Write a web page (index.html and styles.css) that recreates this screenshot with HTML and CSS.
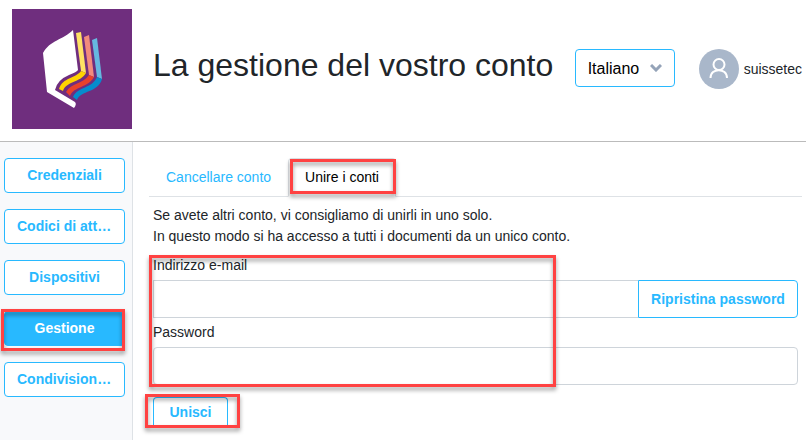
FILE: index.html
```html
<!DOCTYPE html>
<html lang="it">
<head>
  <title>La gestione del vostro conto</title>
  <meta charset="utf-8">
  <link rel="stylesheet" href="styles.css">
</head>
<body>
  <header class="header">
    <svg class="logo" viewBox="0 0 120 120">
      <rect width="120" height="120" fill="#6f2e7e"/>
      <path fill="#fff" d="M61 21 L66 61 Q65 63 57 66 Q45 71 43 81 L63 93 Q65 95 62 99 L35 83 L31 44 C38 31 51 31 61 21Z"/>
      <path fill="#ffe264" d="M64 24 L69 23 L74 64 L69 62Z"/>
      <path fill="#ffd400" d="M69 62 L74 64 C68 74 54 72 51 82 L47 80 C51 68 63 70 69 62Z"/>
      <path fill="#f28b7c" d="M72 28 L77 26 L82 68 L77 66Z"/>
      <path fill="#e8412b" d="M77 66 L82 68 C76 79 62 77 58 87 L54 83 C59 74 71 75 77 66Z"/>
      <path fill="#66b8e0" d="M80 31 L85 29 L90 70 L85 68Z"/>
      <path fill="#058ccd" d="M85 68 L90 70 C86 84 69 81 65 91 L61 88 C66 77 80 80 85 68Z"/>
    </svg>
    <h1 class="title">La gestione del vostro conto</h1>
    <select class="language" aria-label="Lingua">
      <option>Italiano</option>
    </select>
    <div class="user">
      <svg class="avatar" viewBox="0 0 40 40">
        <circle cx="20" cy="20" r="20" fill="#a9b7ca"/>
        <g fill="none" stroke="#fff" stroke-width="2">
          <circle cx="20" cy="15.5" r="5.5"/>
          <path d="M11.5 29 C11.5 18.5 28 18.5 28 29"/>
        </g>
      </svg>
      <span>suissetec</span>
    </div>
  </header>

  <div class="content">
    <nav class="sidebar">
      <button class="btn" type="button">Credenziali</button>
      <button class="btn" type="button">Codici di attivazione</button>
      <button class="btn" type="button">Dispositivi</button>
      <div class="marked">
        <button class="btn active" type="button">Gestione</button>
        <span class="mark mark-menu"></span>
      </div>
      <button class="btn" type="button">Condivisione dati</button>
    </nav>

    <main class="main">
      <div class="tabs">
        <a class="tab" href="#">Cancellare conto</a>
        <div class="marked">
          <a class="tab current" href="#">Unire i conti</a>
          <span class="mark mark-tab"></span>
        </div>
      </div>

      <form class="form">
        <p>Se avete altri conto, vi consigliamo di unirli in uno solo.<br>
        In questo modo si ha accesso a tutti i documenti da un unico conto.</p>

        <div class="marked fields">
          <label for="email">Indirizzo e-mail</label>
          <div class="group">
            <input class="input" type="email" id="email">
            <button class="btn reset" type="button">Ripristina password</button>
          </div>
          <label for="password">Password</label>
          <input class="input" type="password" id="password">
          <span class="mark mark-fields"></span>
        </div>

        <div class="marked submit">
          <button class="btn merge" type="button">Unisci</button>
          <span class="mark mark-submit"></span>
        </div>
      </form>
    </main>
  </div>
</body>
</html>
```

FILE: styles.css
```css
* {
  box-sizing: border-box;
}
body {
  margin: 0;
  min-height: 100vh;
  display: flex;
  flex-direction: column;
  font-family: "Liberation Sans", Arial, sans-serif;
  font-size: 14px;
  line-height: 21px;
  color: #212529;
  background: #fff;
}

/* header */
.header {
  display: flex;
  align-items: center;
  padding: 9px 4px 12px 12px;
  border-bottom: 1px solid #bbb;
}
.logo {
  flex: none;
  width: 120px;
  height: 120px;
}
.title {
  flex: 1;
  margin: 0 0 8px 21px;
  font-size: 32px;
  line-height: 38px;
  font-weight: normal;
  white-space: nowrap;
}
.language {
  appearance: none;
  width: 100px;
  height: 38px;
  margin-bottom: 2px;
  padding: 0 12px;
  border: 1px solid #28b9ff;
  border-radius: 4px;
  font-family: inherit;
  font-size: 16px;
  color: #000;
  background: #fff url("data:image/svg+xml,%3Csvg xmlns='http://www.w3.org/2000/svg' width='12' height='8'%3E%3Cpath d='M1 1l5 5 5-5' fill='none' stroke='%2394a3b8' stroke-width='3'/%3E%3C/svg%3E") no-repeat right 12px center;
}
.user {
  display: flex;
  align-items: center;
  gap: 5px;
  margin-left: 24px;
}
.avatar {
  width: 40px;
  height: 40px;
}

/* sidebar */
.content {
  flex: 1;
  display: flex;
}
.sidebar {
  flex: none;
  width: 133px;
  display: flex;
  flex-direction: column;
  gap: 16px;
  padding: 16px 7px 16px 4px;
  border-right: 1px solid #dee2e6;
  background: #f8f9fb;
}
.btn {
  display: block;
  width: 100%;
  height: 35px;
  padding: 0 12px;
  border: 1px solid #28b9ff;
  border-radius: 4px;
  font-family: inherit;
  font-size: 14px;
  line-height: 21px;
  font-weight: bold;
  color: #28b9ff;
  background: #fff;
  text-align: center;
  white-space: nowrap;
  overflow: hidden;
  text-overflow: ellipsis;
}
.active {
  color: #fff;
  background: #28b9ff;
}

/* tabs */
.main {
  flex: 1;
  min-width: 0;
  padding: 16px 4px 0 16px;
}
.tabs {
  display: flex;
  border-bottom: 1px solid #dee2e6;
}
.tab {
  display: block;
  margin-bottom: -1px;
  padding: 8px 16px;
  border: 1px solid transparent;
  border-radius: 4px 4px 0 0;
  color: #28b9ff;
  text-decoration: none;
}
.current {
  border-color: #dee2e6 #dee2e6 #fff;
  color: #000;
  background: #fff;
}

/* form */
.form {
  padding: 8px 4px 0;
}
.form p {
  margin: 0 0 8px;
}
.fields label {
  display: block;
  margin-bottom: 4px;
}
.group {
  display: flex;
  margin-bottom: 4px;
}
.input {
  display: block;
  width: 100%;
  height: 38px;
  padding: 6px 12px;
  border: 1px solid #ced4da;
  border-radius: 4px;
  font-family: inherit;
  font-size: 14px;
  background: #fff;
}
.group .input {
  flex: 1;
  min-width: 0;
  border-right: 0;
  border-radius: 0;
}
.reset {
  flex: none;
  width: 160px;
  height: 38px;
  border-radius: 0 4px 4px 0;
}
.submit {
  width: 75px;
  margin-top: 12px;
}
.merge {
  height: 30px;
  border-bottom: 0;
  border-radius: 4px 4px 0 0;
}

/* red highlight frames */
.marked {
  position: relative;
}
.mark {
  position: absolute;
  border: 3px solid #ff4242;
  filter: drop-shadow(0 3px 2px rgba(0, 0, 0, 0.4));
  pointer-events: none;
}
.mark-menu {
  inset: -2px 0 -5px -3px;
}
.mark-tab {
  inset: 1px 0 2px 2px;
}
.mark-fields {
  top: 0;
  bottom: -2px;
  left: -4px;
  width: 407px;
}
.mark-submit {
  inset: -3px -12px -1px -8px;
}
```
